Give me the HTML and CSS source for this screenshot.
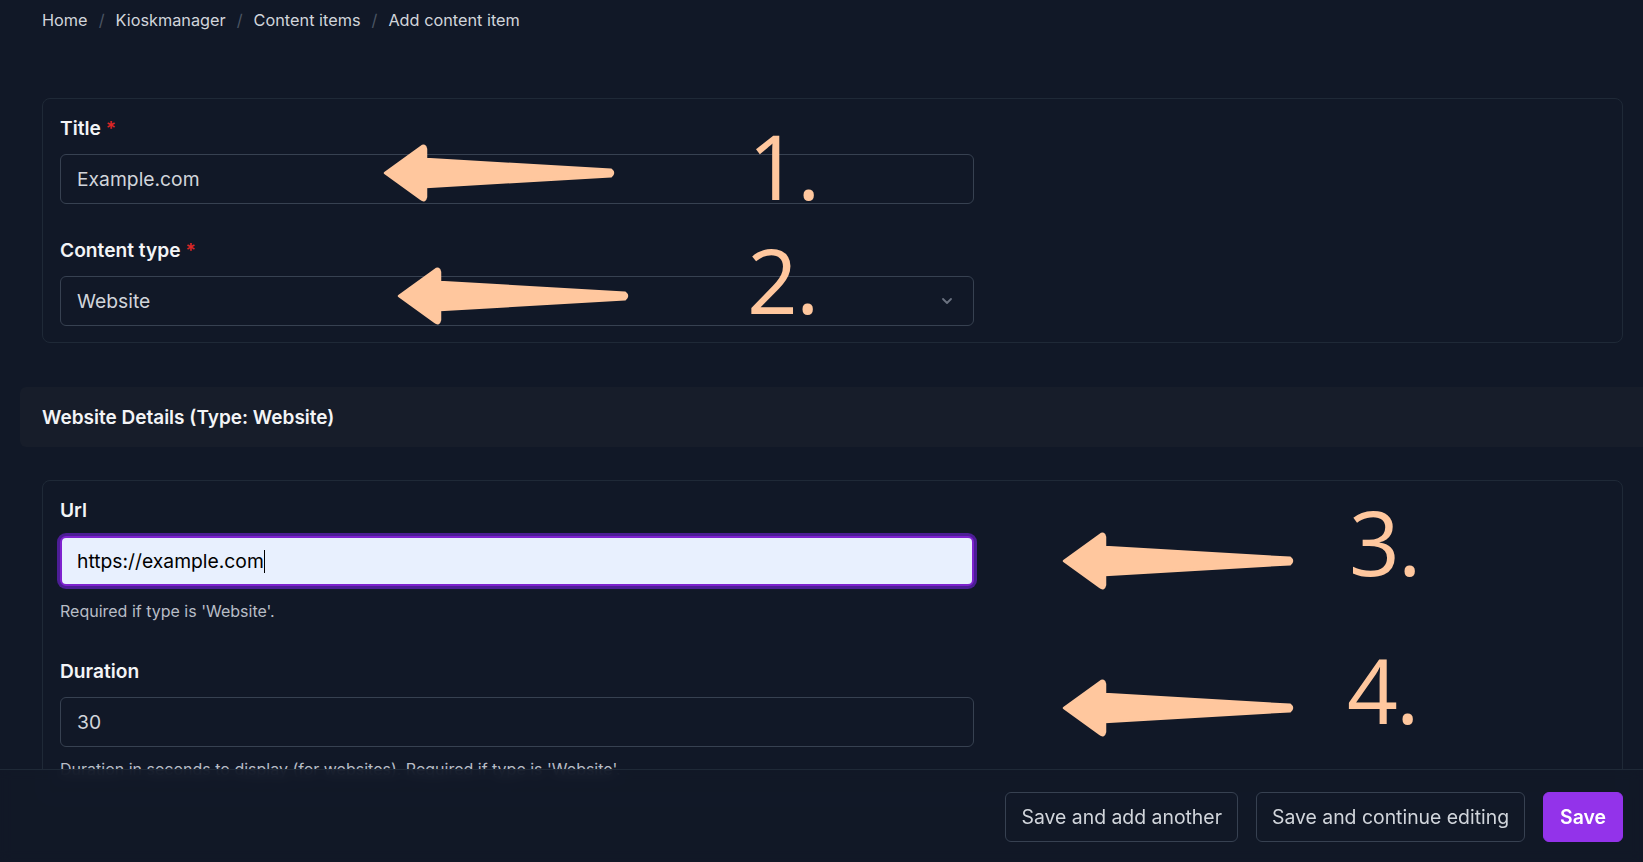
FILE: index.html
```html
<!DOCTYPE html>
<html lang="en">
<head>
<meta charset="utf-8">
<title>Add content item | Kioskmanager</title>
<link rel="stylesheet" href="styles.css">
</head>
<body>
<div class="page">
  <main class="main">
    <nav class="breadcrumb">
      <a class="crumb" href="#">Home</a>
      <span class="sep">/</span>
      <a class="crumb" href="#">Kioskmanager</a>
      <span class="sep">/</span>
      <a class="crumb" href="#">Content items</a>
      <span class="sep">/</span>
      <span class="crumb">Add content item</span>
    </nav>

    <section class="card card-first">
      <div class="field">
        <label class="label">Title <span class="req">*</span></label>
        <input class="input" type="text" value="Example.com">
      </div>
      <div class="field">
        <label class="label">Content type <span class="req">*</span></label>
        <div class="input select">
          <span>Website</span>
          <svg class="chevron" width="12" height="8" viewBox="0 0 12 8"><path d="M2 2 L6 6 L10 2" fill="none" stroke="#6b7280" stroke-width="1.8" stroke-linecap="round" stroke-linejoin="round"/></svg>
        </div>
      </div>
    </section>

    <h2 class="band">Website Details (Type: Website)</h2>

    <section class="card">
      <div class="field">
        <label class="label">Url</label>
        <div class="input input-focus"><span>https://example.com</span><span class="caret"></span></div>
        <p class="help">Required if type is 'Website'.</p>
      </div>
      <div class="field">
        <label class="label">Duration</label>
        <input class="input" type="text" value="30">
        <p class="help help-tight">Duration in seconds to display (for websites). Required if type is 'Website'.</p>
      </div>
    </section>
  </main>

  <footer class="footer">
    <button class="btn">Save and add another</button>
    <button class="btn">Save and continue editing</button>
    <button class="btn btn-primary">Save</button>
  </footer>

  <svg class="annot" width="1643" height="862" viewBox="0 0 1643 862">
    <defs>
      <path id="arrow" d="M0,0 L36,-26 Q40,-29 41,-24 L41,-14 L226,-3.2 Q230,0 226,3.2 L41,14 L41,24 Q40,29 36,26 Z"/>
    </defs>
    <g class="arrow">
      <use href="#arrow" transform="translate(385,173)"/>
      <use href="#arrow" transform="translate(399,296)"/>
      <use href="#arrow" transform="translate(1064,561)"/>
      <use href="#arrow" transform="translate(1064,708)"/>
    </g>
    <g class="num">
      <text x="748" y="200">1.</text>
      <text x="747" y="314">2.</text>
      <text x="1349" y="576">3.</text>
      <text x="1347" y="724">4.</text>
    </g>
  </svg>
</div>
</body>
</html>
```

FILE: styles.css
```css
* { box-sizing: border-box; }

html, body {
  margin: 0;
  height: 100%;
}

body {
  background: #111827;
  color: #d1d5db;
  font-family: Inter, "Noto Sans", "Liberation Sans", sans-serif;
  overflow: hidden;
}

.page {
  position: relative;
  width: 1643px;
  height: 862px;
  overflow: hidden;
}

.main {
  padding: 8px 20px 0 42px;
}

.breadcrumb {
  display: flex;
  align-items: center;
  gap: 11px;
  height: 24px;
  font-size: 16.3px;
}

.crumb {
  color: #d1d5db;
  text-decoration: none;
}

.sep {
  color: #4b5563;
}

.card {
  display: flex;
  flex-direction: column;
  gap: 34px;
  border: 1px solid #1f2937;
  border-radius: 8px;
  padding: 17px 17px 16px;
}

.card-first {
  margin-top: 66px;
}

.field {
  width: 914px;
}

.label {
  display: block;
  font-size: 19.2px;
  line-height: 24px;
  font-weight: 600;
  color: #f3f4f6;
  margin-bottom: 14px;
}

.req {
  color: #dc2626;
}

.input {
  display: flex;
  align-items: center;
  width: 914px;
  height: 50px;
  padding: 0 16px;
  background: #111827;
  border: 1px solid #374151;
  border-radius: 6px;
  color: #d1d5db;
  font-family: inherit;
  font-size: 19.3px;
  outline: none;
}

.select {
  justify-content: space-between;
  padding-right: 20px;
}

.chevron {
  display: block;
}

.input-focus {
  background: #e8f0fe;
  color: #000;
  border: 2px solid #7e22ce;
  box-shadow: 0 0 0 3px #4c1d95;
  padding-left: 15px;
}

.caret {
  display: inline-block;
  width: 1px;
  height: 23px;
  background: #000;
}

.help {
  margin: 15px 0 4px;
  font-size: 16px;
  line-height: 20px;
  color: #b8bdc6;
}

.help-tight {
  margin-top: 12px;
}

.band {
  margin: 44px -20px 33px -22px;
  height: 60px;
  padding-left: 22px;
  display: flex;
  align-items: center;
  background: #171d2a;
  border-radius: 6px 0 0 6px;
  font-size: 19px;
  font-weight: 600;
  color: #f3f4f6;
}

.footer {
  position: absolute;
  left: 0;
  right: 0;
  bottom: 0;
  height: 93px;
  display: flex;
  justify-content: flex-end;
  align-items: flex-start;
  gap: 18px;
  padding: 22px 20px 0 0;
  background: rgba(17, 24, 39, 0.88);
  backdrop-filter: blur(6px);
  border-top: 1px solid #1f2937;
}

.btn {
  height: 50px;
  padding: 0 15px;
  border: 1px solid #374151;
  border-radius: 6px;
  background: transparent;
  color: #d1d5db;
  font-family: inherit;
  font-size: 19.4px;
  cursor: pointer;
}

.btn-primary {
  background: #9333ea;
  border-color: #9333ea;
  color: #fff;
  font-weight: 600;
  padding: 0 16px;
}

.annot {
  position: absolute;
  left: 0;
  top: 0;
  pointer-events: none;
}

.arrow {
  fill: #ffc79e;
  stroke: #ffc79e;
  stroke-width: 2.5;
  stroke-linejoin: round;
}

.num text {
  fill: #ffc79e;
  font-family: "Open Sans", "Noto Sans", sans-serif;
  font-weight: 400;
  font-size: 89px;
  letter-spacing: -2px;
}
```
